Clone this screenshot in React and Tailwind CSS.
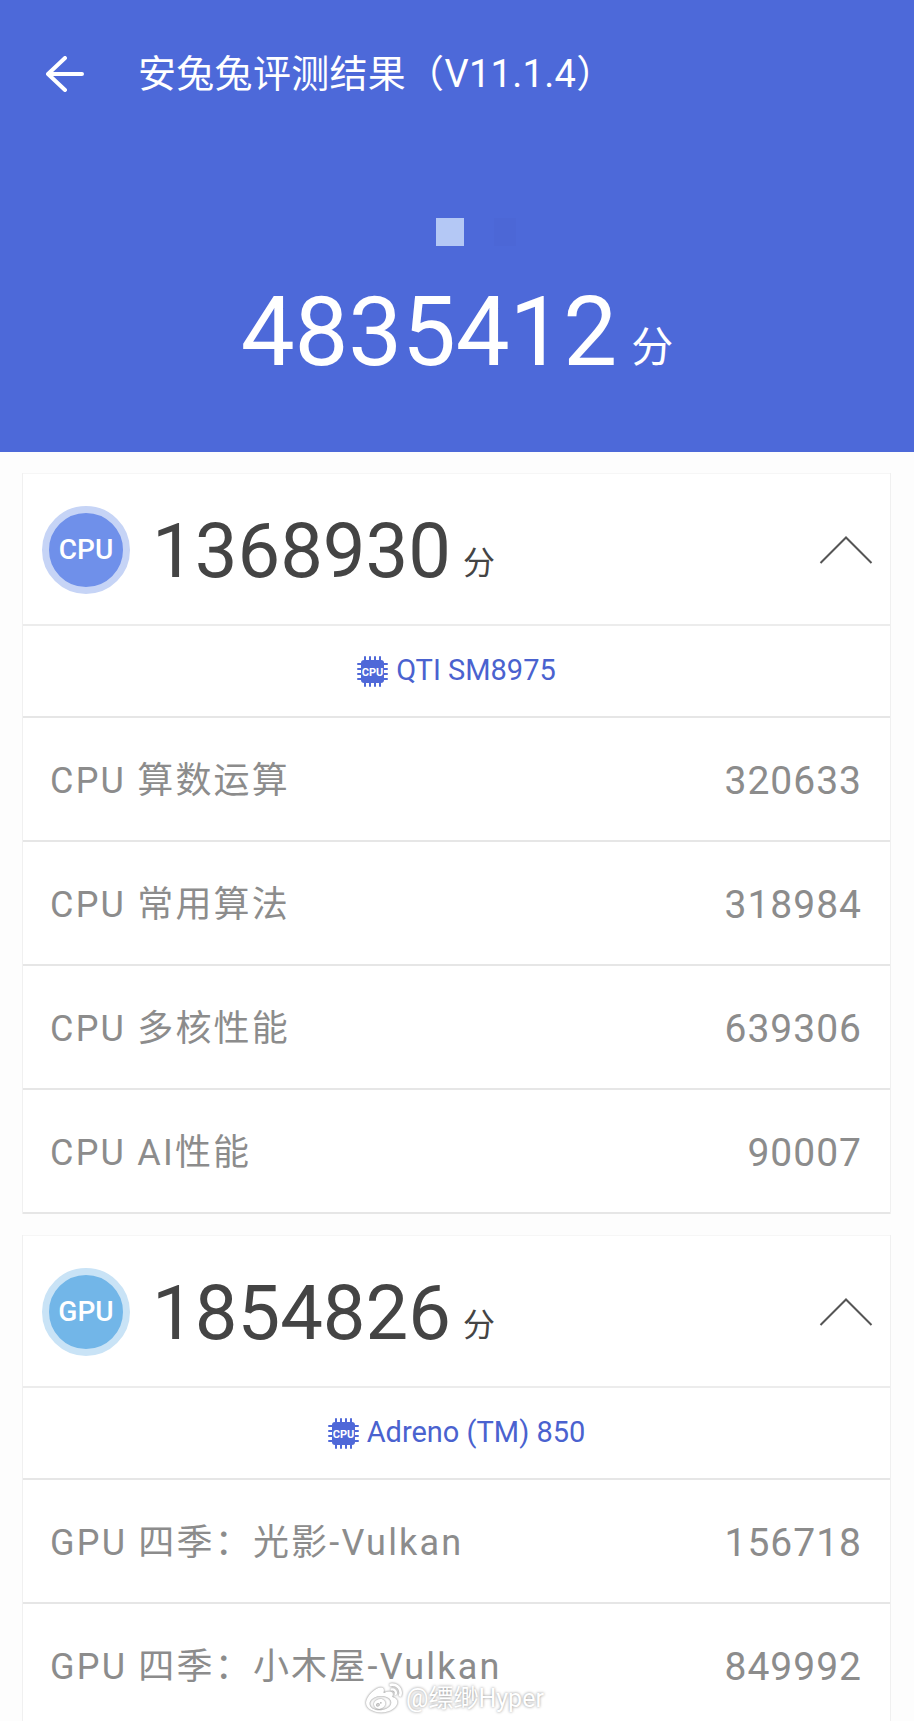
import React from "react";
import { FaWeibo } from "react-icons/fa";

const FONT = "font-['Roboto','Noto_Sans_CJK_SC',sans-serif]";

const cpuRows = [
  ["CPU 算数运算", "320633"],
  ["CPU 常用算法", "318984"],
  ["CPU 多核性能", "639306"],
  ["CPU AI性能", "90007"],
];

const gpuRows = [
  ["GPU 四季：光影-Vulkan", "156718"],
  ["GPU 四季：小木屋-Vulkan", "849992"],
];

const ChipIcon = () => (
  <svg width="31" height="31" viewBox="0 0 31 31" className="shrink-0">
    <g stroke="#4f68d8" strokeWidth="2" strokeLinecap="round">
      {[8, 13, 18, 23].map((p) => (
        <g key={p}>
          <line x1={p} y1="1" x2={p} y2="30" />
          <line x1="1" y1={p} x2="30" y2={p} />
        </g>
      ))}
    </g>
    <rect x="4" y="4" width="23" height="23" rx="3" fill="#4f68d8" />
    <text x="15.5" y="19.5" textAnchor="middle" fontSize="11" fontWeight="700" fill="#ffffff" fontFamily="Roboto">
      CPU
    </text>
  </svg>
);

const Chevron = () => (
  <svg width="54" height="28" viewBox="0 0 54 28" fill="none" stroke="#555555" strokeWidth="2">
    <path d="M1.5 27L27 1.5L52.5 27" />
  </svg>
);

const Row = ({ label, value }) => (
  <div className="h-[120px] mt-[4px] flex items-center justify-between pl-[27px] pr-[28px] bg-white border-b-2 border-[#e6e6e6] text-[#8c8c8c]">
    <span className="text-[36px] tracking-[2.2px] whitespace-nowrap">{label}</span>
    <span className="text-[39px] tracking-[1px]">{value}</span>
  </div>
);

const Section = ({ badge, ring, fill, score, chip, rows }) => (
  <section className="mt-[21px] ml-[22px] mr-[23px] border-x border-[#f0f0f0] bg-white">
    <div className="h-[153px] flex items-center pl-[19px] pr-[17px] border-t border-b-2 border-t-[#f6f6f6] border-b-[#ececec]">
      <div className={`w-[88px] h-[88px] mt-[2px] rounded-full flex items-center justify-center border-[7px] ${ring} ${fill}`}>
        <span className="text-white text-[28px] font-medium">{badge}</span>
      </div>
      <span className="ml-[22px] mt-[4px] text-[76px] leading-none text-[#444444]">{score}</span>
      <span className="ml-[12px] mt-[28px] text-[32px] leading-none text-[#444444]">分</span>
      <span className="ml-auto mt-[2px]">
        <Chevron />
      </span>
    </div>
    <div className="h-[92px] flex items-center justify-center gap-[8px] border-b-2 border-[#e6e6e6]">
      <ChipIcon />
      <span className="text-[29px] text-[#4a62cf]">{chip}</span>
    </div>
    {rows.map(([label, value]) => (
      <Row key={label} label={label} value={value} />
    ))}
  </section>
);

export default function App() {
  return (
    <div className={`relative w-[914px] h-[1721px] overflow-hidden bg-[#fdfdfd] ${FONT}`}>
      <header className="h-[452px] bg-[#4d69d9] text-white flex flex-col">
        <div className="h-[148px] flex items-center pl-[46px]">
          <svg width="38" height="36" viewBox="0 0 38 36" fill="none" stroke="#ffffff" strokeWidth="4" strokeLinecap="round" strokeLinejoin="round">
            <path d="M19 2L2 18L19 34M2 18H36" />
          </svg>
          <h1 className="ml-[54px] text-[38px] tracking-[0.3px] font-normal whitespace-nowrap">安兔兔评测结果（V11.1.4）</h1>
        </div>
        <div className="mt-[70px] flex pl-[436px] gap-[30px]">
          <span className="w-[28px] h-[28px] bg-[#b4c8f5]" />
          <span className="w-[22px] h-[28px] bg-[#4c67d6]" />
        </div>
        <div className="mt-[46px] flex items-end justify-center">
          <span className="text-[96px] leading-[80px] tracking-[-0.2px]">4835412</span>
          <span className="ml-[14px] mb-[3px] text-[42px] leading-none">分</span>
        </div>
      </header>

      <Section
        badge="CPU"
        ring="border-[#c6d4f6]"
        fill="bg-[#6f90ea]"
        score="1368930"
        chip="QTI SM8975"
        rows={cpuRows}
      />
      <Section
        badge="GPU"
        ring="border-[#c9e3f6]"
        fill="bg-[#72b6e8]"
        score="1854826"
        chip="Adreno (TM) 850"
        rows={gpuRows}
      />

      {/* 微博水印 */}
      <div className="absolute left-[366px] top-[1680px] flex items-center gap-[4px] text-white text-[25px] [text-shadow:0_0_3px_#8a8a8a]">
        <FaWeibo className="text-[36px] [filter:drop-shadow(0_0_1px_#777777)]" />
        <span>@缥缈Hyper</span>
      </div>
    </div>
  );
}
